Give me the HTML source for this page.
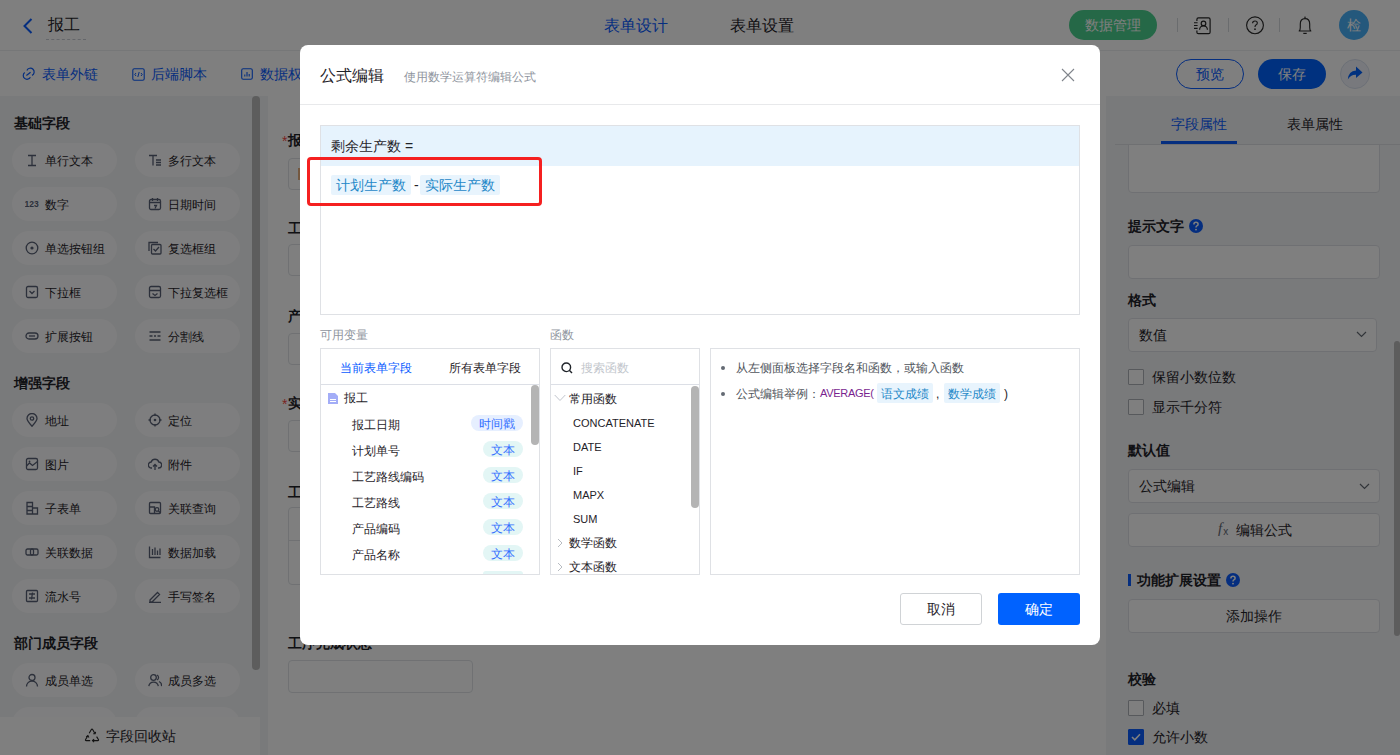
<!DOCTYPE html>
<html><head><meta charset="utf-8">
<style>
*{box-sizing:border-box;margin:0;padding:0}
html,body{width:1400px;height:755px;overflow:hidden}
body{position:relative;font-family:"Liberation Sans",sans-serif;font-size:12px;color:#1f2329;background:#fff}
.a{position:absolute}
.t{position:absolute;white-space:nowrap;line-height:1}
.chip{position:absolute;width:105px;height:34px;border-radius:17px;background:#fdfdfe}
.chip span{position:absolute;left:33px;top:12px;font-size:12px;line-height:12px;color:#1f2329;white-space:nowrap}
.chip svg{position:absolute;left:13px;top:10px}
.sec{position:absolute;left:14px;font-size:14px;font-weight:bold;line-height:14px;color:#1f2329}
.inp{position:absolute;left:1128px;width:252px;height:34px;background:#fff;border:1px solid #dfe1e6;border-radius:4px}
.lbl{position:absolute;left:1128px;font-size:14px;font-weight:bold;line-height:14px;white-space:nowrap}
.cb{position:absolute;left:1128px;width:16px;height:16px;border:1px solid #aeb2b9;border-radius:1px;background:#fff}
.rt{position:absolute;left:1152px;font-size:14px;line-height:14px;white-space:nowrap;color:#1f2329}
.fl{position:absolute;left:288px;font-size:14px;line-height:14px;font-weight:bold;white-space:nowrap;color:#1f2329}
.fin{position:absolute;left:288px;width:185px;height:32px;border:1px solid #e0e2e6;border-radius:4px;background:#fff}
.req{position:absolute;left:282px;color:#f54a45;font-size:14px;line-height:14px}
.box{position:absolute;border:1px solid #dfe1e5;background:#fff}
.tag{position:absolute;height:20px;background:#e8f4fd;color:#1e88c8;font-size:14px;line-height:20px;padding:0 5px;white-space:nowrap;border-radius:2px}
.vi{position:absolute;left:352px;font-size:12px;line-height:12px;white-space:nowrap;color:#1f2329}
.vt{position:absolute;height:16px;border-radius:8px;font-size:12px;line-height:18px;overflow:hidden;color:#3370ff;text-align:center;white-space:nowrap}
.fi{position:absolute;left:573px;font-size:11px;line-height:11px;color:#1f2329;white-space:nowrap}
.fg{position:absolute;left:569px;font-size:12px;line-height:12px;color:#1f2329;white-space:nowrap}
</style></head><body>
<!-- ===== HEADER ===== -->
<div class="a" style="left:0;top:0;width:1400px;height:51px;background:#fff;border-bottom:1px solid #eeeff1"></div>
<svg class="a" style="left:22px;top:18px" width="12" height="16" viewBox="0 0 12 16"><path d="M9.5 1 L2.5 8 L9.5 15" fill="none" stroke="#0a5cff" stroke-width="2"/></svg>
<div class="t" style="left:48px;top:17px;font-size:16px;color:#1f2329">报工</div>
<div class="a" style="left:46px;top:39px;width:40px;border-top:1px dashed #c9cdd4"></div>
<div class="t" style="left:604px;top:18px;font-size:16px;color:#0a5cff">表单设计</div>
<div class="t" style="left:730px;top:18px;font-size:16px;color:#1f2329">表单设置</div>
<div class="a" style="left:1069px;top:10px;width:88px;height:30px;border-radius:15px;background:#4ad08e"></div>
<div class="t" style="left:1085px;top:18px;font-size:14px;color:#fff">数据管理</div>
<div class="a" style="left:1177px;top:18px;width:1px;height:14px;background:#d5d8dc"></div>
<div class="a" style="left:1228px;top:18px;width:1px;height:14px;background:#d5d8dc"></div>
<div class="a" style="left:1279px;top:18px;width:1px;height:14px;background:#d5d8dc"></div>
<svg class="a" style="left:1193px;top:16px" width="20" height="20" viewBox="0 0 20 20"><path d="M3.9 5 V3.4 Q3.9 1.9 5.4 1.9 H15.6 Q17.1 1.9 17.1 3.4 V16.2 Q17.1 17.7 15.6 17.7 H5.4 Q3.9 17.7 3.9 16.2 V14.5" fill="none" stroke="#262626" stroke-width="1.2"/><path d="M1 6.7h3.6M1 9.5h3.6M1 12.4h3.6" stroke="#262626" stroke-width="1.1"/><circle cx="10.5" cy="7.4" r="2.3" fill="none" stroke="#262626" stroke-width="1.2"/><path d="M6.6 13.8 A3.9 3.9 0 0 1 14.4 13.8" fill="none" stroke="#262626" stroke-width="1.2"/></svg>
<svg class="a" style="left:1245px;top:16px" width="20" height="20" viewBox="0 0 20 20"><circle cx="10" cy="9.3" r="8.4" fill="none" stroke="#2a2a2a" stroke-width="1.15"/><path d="M7.6 7.2 Q7.6 5 10 5 Q12.3 5 12.3 7 Q12.3 8.3 10.9 9.1 Q10 9.7 10 11" fill="none" stroke="#2a2a2a" stroke-width="1.15"/><circle cx="10" cy="13.2" r="0.85" fill="#2a2a2a"/></svg>
<svg class="a" style="left:1297px;top:15px" width="16" height="20" viewBox="0 0 16 20"><path d="M2.2 16 Q3.3 15 3.3 12.5 L3.3 9 Q3.3 3.6 8 3.6 Q12.7 3.6 12.7 9 L12.7 12.5 Q12.7 15 13.8 16 Z" fill="none" stroke="#2a2a2a" stroke-width="1.15" stroke-linejoin="round"/><path d="M6.3 18.4h3.4" stroke="#2a2a2a" stroke-width="1.2"/><circle cx="8" cy="2.3" r="0.8" fill="#2a2a2a"/></svg>
<div class="a" style="left:1339px;top:10px;width:30px;height:30px;border-radius:15px;background:#48b0f8"></div>
<div class="t" style="left:1347px;top:18px;font-size:14px;color:#fff">检</div>
<!-- ===== TOOLBAR ===== -->
<div class="a" style="left:0;top:51px;width:1400px;height:45px;background:#fff;box-shadow:0 1px 2px rgba(0,0,0,.06)"></div>
<svg class="a" style="left:22px;top:67px" width="14" height="14" viewBox="0 0 14 14"><path d="M4.9 3.4 A3.8 3.8 0 1 1 10 8.4" fill="none" stroke="#0a5cff" stroke-width="1.2"/><path d="M2.7 5.5 A3.8 3.8 0 1 0 8.4 10.3" fill="none" stroke="#0a5cff" stroke-width="1.2"/><path d="M4.4 8.5 L8.6 5.2" stroke="#0a5cff" stroke-width="1.2"/></svg>
<div class="t" style="left:42px;top:67px;font-size:14px;color:#0a5cff">表单外链</div>
<svg class="a" style="left:132px;top:68px" width="13" height="13" viewBox="0 0 13 13"><rect x="0.8" y="0.8" width="11.4" height="11.4" rx="1.5" fill="none" stroke="#0a5cff" stroke-width="1.1"/><path d="M4 5 L2.8 6.5 L4 8 M9 5 L10.2 6.5 L9 8 M7.2 4 L5.8 9" fill="none" stroke="#0a5cff" stroke-width="1"/></svg>
<div class="t" style="left:151px;top:67px;font-size:14px;color:#0a5cff">后端脚本</div>
<svg class="a" style="left:241px;top:68px" width="12" height="12" viewBox="0 0 12 12"><rect x="0.7" y="0.7" width="10.6" height="10.6" rx="1.5" fill="none" stroke="#0a5cff" stroke-width="1.1"/><path d="M3.8 8.5V6.5M6 8.5V4M8.2 8.5V6" stroke="#0a5cff" stroke-width="1.1"/></svg>
<div class="t" style="left:260px;top:67px;font-size:14px;color:#0a5cff">数据权限</div>
<div class="a" style="left:1176px;top:59px;width:68px;height:30px;border-radius:15px;border:1px solid #0a5cff;background:#fff"></div>
<div class="t" style="left:1196px;top:67px;font-size:14px;color:#0a5cff">预览</div>
<div class="a" style="left:1258px;top:59px;width:68px;height:30px;border-radius:15px;background:#0062ff"></div>
<div class="t" style="left:1278px;top:67px;font-size:14px;color:#fff">保存</div>
<div class="a" style="left:1340px;top:59px;width:30px;height:30px;border-radius:15px;background:#f0f3fa;border:1px solid #d9e0ee"></div>
<svg class="a" style="left:1347px;top:66px" width="16" height="15" viewBox="0 0 16 15"><path d="M9 0.5 L15.5 6.5 L9 12 V8.7 Q3.5 8.5 0.8 13.5 Q1.5 5 9 4.5 Z" fill="#0062ff"/></svg>
<!-- ===== LEFT PANEL ===== -->
<div class="a" style="left:0;top:96px;width:268px;height:659px;background:#f3f4f6"></div>
<div class="sec" style="top:116px">基础字段</div>
<div class="sec" style="top:376px">增强字段</div>
<div class="sec" style="top:636px">部门成员字段</div>
<div class="chip" style="left:12px;top:143px"><svg width="14" height="14" viewBox="0 0 14 14"><path d="M3 2.5h8M3 12.5h8M7 2.5v10" stroke="#596176" stroke-width="1.3" fill="none"/></svg><span>单行文本</span></div>
<div class="chip" style="left:135px;top:143px"><svg width="14" height="14" viewBox="0 0 14 14"><path d="M1 2.5h8M5 2.5v10M8 7h5M8 9.5h5M8 12h5" stroke="#596176" stroke-width="1.3" fill="none"/></svg><span>多行文本</span></div>
<div class="chip" style="left:12px;top:187px"><svg width="14" height="14" viewBox="0 0 14 14"><text x="-0.5" y="9.5" font-family="Liberation Sans" font-weight="bold" font-size="8.5" fill="#596176">123</text></svg><span>数字</span></div>
<div class="chip" style="left:135px;top:187px"><svg width="14" height="14" viewBox="0 0 14 14"><rect x="1.5" y="2.5" width="11" height="10" rx="1.5" stroke="#596176" stroke-width="1.3" fill="none"/><path d="M1.5 5.5h11M4.5 1v3M9.5 1v3M6 8.5h2.5l-1.5 3" stroke="#596176" stroke-width="1.3" fill="none"/></svg><span>日期时间</span></div>
<div class="chip" style="left:12px;top:231px"><svg width="14" height="14" viewBox="0 0 14 14"><circle cx="7" cy="7" r="5.8" stroke="#596176" stroke-width="1.3" fill="none"/><circle cx="7" cy="7" r="1.6" fill="#596176"/></svg><span>单选按钮组</span></div>
<div class="chip" style="left:135px;top:231px"><svg width="14" height="14" viewBox="0 0 14 14"><path d="M1 10V1.5h9" stroke="#596176" stroke-width="1.3" fill="none"/><rect x="3.5" y="3.5" width="9.5" height="9.5" rx="1" stroke="#596176" stroke-width="1.3" fill="none"/><path d="M5.5 8l2 2 3.5-4" stroke="#596176" stroke-width="1.3" fill="none"/></svg><span>复选框组</span></div>
<div class="chip" style="left:12px;top:275px"><svg width="14" height="14" viewBox="0 0 14 14"><rect x="1.5" y="1.5" width="11" height="11" rx="1.5" stroke="#596176" stroke-width="1.3" fill="none"/><path d="M4.5 6l2.5 2.5L9.5 6" stroke="#596176" stroke-width="1.3" fill="none"/></svg><span>下拉框</span></div>
<div class="chip" style="left:135px;top:275px"><svg width="14" height="14" viewBox="0 0 14 14"><rect x="1.5" y="1.5" width="11" height="11" rx="1.5" stroke="#596176" stroke-width="1.3" fill="none"/><path d="M1.5 5.5h11M4.5 8.5l2.5 2 2.5-2" stroke="#596176" stroke-width="1.3" fill="none"/></svg><span>下拉复选框</span></div>
<div class="chip" style="left:12px;top:319px"><svg width="14" height="14" viewBox="0 0 14 14"><rect x="1" y="4" width="12" height="6" rx="3" stroke="#596176" stroke-width="1.3" fill="none"/><path d="M4 7h6" stroke="#596176" stroke-width="1.3" fill="none"/></svg><span>扩展按钮</span></div>
<div class="chip" style="left:135px;top:319px"><svg width="14" height="14" viewBox="0 0 14 14"><path d="M1.5 3h11M1.5 11h11M1.5 7h3M6 7h2M9.5 7h3" stroke="#596176" stroke-width="1.3" fill="none"/></svg><span>分割线</span></div>
<div class="chip" style="left:12px;top:403px"><svg width="14" height="14" viewBox="0 0 14 14"><path d="M7 13.2C4 10 2 7.8 2 5.5A5 5 0 0 1 12 5.5C12 7.8 10 10 7 13.2Z" stroke="#596176" stroke-width="1.3" fill="none"/><circle cx="7" cy="5.5" r="1.7" stroke="#596176" stroke-width="1.3" fill="none"/></svg><span>地址</span></div>
<div class="chip" style="left:135px;top:403px"><svg width="14" height="14" viewBox="0 0 14 14"><circle cx="7" cy="7" r="5" stroke="#596176" stroke-width="1.3" fill="none"/><circle cx="7" cy="7" r="1.3" fill="#596176"/><path d="M7 0.5v2.5M7 11v2.5M0.5 7h2.5M11 7h2.5" stroke="#596176" stroke-width="1.3" fill="none"/></svg><span>定位</span></div>
<div class="chip" style="left:12px;top:447px"><svg width="14" height="14" viewBox="0 0 14 14"><rect x="1.5" y="1.5" width="11" height="11" rx="1.5" stroke="#596176" stroke-width="1.3" fill="none"/><path d="M1.5 9l3-3 3 2.5 5-4" stroke="#596176" stroke-width="1.3" fill="none"/><circle cx="4.5" cy="4.5" r="0.9" fill="#596176"/></svg><span>图片</span></div>
<div class="chip" style="left:135px;top:447px"><svg width="14" height="14" viewBox="0 0 14 14"><path d="M4 11H3.5A3 3 0 0 1 3.2 5 4 4 0 0 1 10.8 5 3 3 0 0 1 10.5 11H10" stroke="#596176" stroke-width="1.3" fill="none"/><path d="M7 13V7.5M5 9.5l2-2 2 2" stroke="#596176" stroke-width="1.3" fill="none"/></svg><span>附件</span></div>
<div class="chip" style="left:12px;top:491px"><svg width="14" height="14" viewBox="0 0 14 14"><path d="M2 1.5h5.5V13H2z M7.5 7h5V13h-5 M2 5.5h5.5M2 9.5h5.5" stroke="#596176" stroke-width="1.3" fill="none"/></svg><span>子表单</span></div>
<div class="chip" style="left:135px;top:491px"><svg width="14" height="14" viewBox="0 0 14 14"><rect x="1.5" y="1.5" width="11" height="11" rx="1" stroke="#596176" stroke-width="1.3" fill="none"/><path d="M1.5 6h5V12.5" stroke="#596176" stroke-width="1.3" fill="none"/><circle cx="9" cy="8.5" r="1.8" stroke="#596176" stroke-width="1.3" fill="none"/><path d="M10.3 9.8l2 2" stroke="#596176" stroke-width="1.3" fill="none"/></svg><span>关联查询</span></div>
<div class="chip" style="left:12px;top:535px"><svg width="14" height="14" viewBox="0 0 14 14"><rect x="1" y="4" width="7.5" height="6" rx="1.5" stroke="#596176" stroke-width="1.3" fill="none"/><rect x="5.5" y="4" width="7.5" height="6" rx="1.5" stroke="#596176" stroke-width="1.3" fill="none"/></svg><span>关联数据</span></div>
<div class="chip" style="left:135px;top:535px"><svg width="14" height="14" viewBox="0 0 14 14"><path d="M1.5 1.5v11h11M4.5 4v6M7 2.5v7.5M9.5 5.5v4.5M12 3.5v6.5" stroke="#596176" stroke-width="1.3" fill="none"/></svg><span>数据加载</span></div>
<div class="chip" style="left:12px;top:579px"><svg width="14" height="14" viewBox="0 0 14 14"><rect x="1.5" y="1.5" width="11" height="11" rx="1" stroke="#596176" stroke-width="1.3" fill="none"/><path d="M4 5h6M4 9h6M7.5 3.5L6.5 10.5" stroke="#596176" stroke-width="1.3" fill="none"/></svg><span>流水号</span></div>
<div class="chip" style="left:135px;top:579px"><svg width="14" height="14" viewBox="0 0 14 14"><path d="M2 11l7.5-7.5 2 2L4 13H2z M1 13.5h12" stroke="#596176" stroke-width="1.3" fill="none"/></svg><span>手写签名</span></div>
<div class="chip" style="left:12px;top:663px"><svg width="14" height="14" viewBox="0 0 14 14"><circle cx="7" cy="4.5" r="3" stroke="#596176" stroke-width="1.3" fill="none"/><path d="M1.5 13.5a5.5 5.5 0 0 1 11 0" stroke="#596176" stroke-width="1.3" fill="none"/></svg><span>成员单选</span></div>
<div class="chip" style="left:135px;top:663px"><svg width="14" height="14" viewBox="0 0 14 14"><circle cx="5.5" cy="4.5" r="2.8" stroke="#596176" stroke-width="1.3" fill="none"/><path d="M0.8 13.2a4.8 4.8 0 0 1 9.5 0M9 2a2.8 2.8 0 0 1 0 5M11 8.5a4.5 4.5 0 0 1 2.5 4.7" stroke="#596176" stroke-width="1.3" fill="none"/></svg><span>成员多选</span></div>
<div class="chip" style="left:12px;top:707px"><svg width="14" height="14" viewBox="0 0 14 14"><rect x="4.5" y="1.5" width="5" height="4" stroke="#596176" stroke-width="1.3" fill="none"/><path d="M7 5.5v3M2.5 11V8.5h9V11" stroke="#596176" stroke-width="1.3" fill="none"/></svg><span>部门单选</span></div>
<div class="chip" style="left:135px;top:707px"><svg width="14" height="14" viewBox="0 0 14 14"><rect x="4.5" y="1.5" width="5" height="4" stroke="#596176" stroke-width="1.3" fill="none"/><path d="M7 5.5v3M2.5 11V8.5h9V11" stroke="#596176" stroke-width="1.3" fill="none"/></svg><span>部门多选</span></div><div class="a" style="left:252px;top:96px;width:8px;height:574px;border-radius:4px;background:#bababa"></div>
<div class="a" style="left:0;top:717px;width:260px;height:38px;background:#fefefe"></div>
<svg class="a" style="left:84px;top:727px" width="16" height="16" viewBox="0 0 16 16" fill="none" stroke="#262626" stroke-width="1.1"><path d="M5.2 6.2 L7.2 2.8 Q8 1.5 8.8 2.8 L10.9 6.5"/><path d="M9.2 6.8 L11.1 6.8 L11.6 4.9"/><path d="M12.6 9.6 L14.4 12.5 Q15 13.6 13.8 13.6 L8.6 13.6"/><path d="M10.1 12.1 L8.5 13.6 L10.1 15.1"/><path d="M6.2 13.6 L2.2 13.6 Q1 13.6 1.6 12.5 L3.8 8.8"/><path d="M2.2 9.9 L3.9 8.6 L4.9 10.5"/></svg>
<div class="t" style="left:106px;top:729px;font-size:14px;color:#1f2329">字段回收站</div>
<!-- ===== CANVAS ===== -->
<div class="a" style="left:268px;top:96px;width:838px;height:659px;background:#fff"></div>
<div class="req" style="top:134px">*</div><div class="fl" style="top:133px">报工日期</div>
<div class="fin" style="top:158px"></div>
<div class="a" style="left:298px;top:168px;width:2px;height:12px;background:#e8b080"></div>
<div class="fl" style="top:221px">工序名称</div>
<div class="fin" style="top:244px"></div>
<div class="fl" style="top:309px">产品名称</div>
<div class="fin" style="top:333px"></div>
<div class="req" style="top:397px">*</div><div class="fl" style="top:396px">实际生产数</div>
<div class="fin" style="top:420px"></div>
<div class="fl" style="top:485px">工序明细</div>
<div class="fin" style="top:507px;height:78px"></div>
<div class="a" style="left:288px;top:540px;width:185px;height:1px;background:#e0e2e6"></div>
<div class="fl" style="top:636px">工序完成状态</div>
<div class="fin" style="top:660px;height:33px"></div>
<!-- ===== RIGHT PANEL ===== -->
<div class="a" style="left:1106px;top:96px;width:294px;height:659px;background:#f3f4f6"></div>
<div class="inp" style="top:140px;height:53px"></div>
<div class="a" style="left:1106px;top:96px;width:294px;height:49px;background:#f3f4f6"></div>
<div class="t" style="left:1171px;top:117px;font-size:14px;color:#0a5cff">字段属性</div>
<div class="t" style="left:1287px;top:117px;font-size:14px;color:#1f2329">表单属性</div>
<div class="a" style="left:1115px;top:144px;width:285px;height:1px;background:#dfe1e5"></div>
<div class="a" style="left:1161px;top:141px;width:76px;height:3px;background:#0a5cff"></div>
<div class="lbl" style="top:219px">提示文字</div>
<svg class="a" style="left:1189px;top:219px" width="14" height="14" viewBox="0 0 14 14"><circle cx="7" cy="7" r="7" fill="#0a5cff"/><path d="M4.9 5.4 Q4.9 3.3 7 3.3 Q9.1 3.3 9.1 5.2 Q9.1 6.3 7.8 6.9 Q7 7.3 7 8.6" fill="none" stroke="#fff" stroke-width="1.5"/><circle cx="7" cy="10.6" r="0.95" fill="#fff"/></svg>
<div class="inp" style="top:245px"></div>
<div class="lbl" style="top:293px">格式</div>
<div class="inp" style="top:318px;width:249px;height:34px"></div>
<div class="t" style="left:1139px;top:328px;font-size:14px;color:#1f2329">数值</div>
<svg class="a" style="left:1356px;top:331px" width="11" height="7" viewBox="0 0 11 7"><path d="M1 1 L5.5 5.5 L10 1" fill="none" stroke="#646a73" stroke-width="1.2"/></svg>
<div class="cb" style="top:369px"></div><div class="rt" style="top:370px">保留小数位数</div>
<div class="cb" style="top:399px"></div><div class="rt" style="top:400px">显示千分符</div>
<div class="lbl" style="top:443px">默认值</div>
<div class="inp" style="top:469px;height:34px"></div>
<div class="t" style="left:1139px;top:479px;font-size:14px;color:#1f2329">公式编辑</div>
<svg class="a" style="left:1359px;top:483px" width="11" height="7" viewBox="0 0 11 7"><path d="M1 1 L5.5 5.5 L10 1" fill="none" stroke="#646a73" stroke-width="1.2"/></svg>
<div class="inp" style="top:513px;height:34px"></div>
<div class="t" style="left:1218px;top:521px;font-size:15px;font-style:italic;font-family:'Liberation Serif',serif;color:#646a73">f<span style="font-size:10px;font-style:normal;font-family:'Liberation Sans',sans-serif;position:relative;top:2px;left:1px">x</span></div>
<div class="t" style="left:1236px;top:523px;font-size:14px;color:#1f2329">编辑公式</div>
<div class="a" style="left:1128px;top:574px;width:3px;height:12px;background:#0a5cff"></div>
<div class="lbl" style="left:1137px;top:573px">功能扩展设置</div>
<svg class="a" style="left:1226px;top:573px" width="14" height="14" viewBox="0 0 14 14"><circle cx="7" cy="7" r="7" fill="#0a5cff"/><path d="M4.9 5.4 Q4.9 3.3 7 3.3 Q9.1 3.3 9.1 5.2 Q9.1 6.3 7.8 6.9 Q7 7.3 7 8.6" fill="none" stroke="#fff" stroke-width="1.5"/><circle cx="7" cy="10.6" r="0.95" fill="#fff"/></svg>
<div class="inp" style="top:599px;height:34px"></div>
<div class="t" style="left:1226px;top:609px;font-size:14px;color:#1f2329">添加操作</div>
<div class="lbl" style="top:672px">校验</div>
<div class="cb" style="top:700px"></div><div class="rt" style="top:701px">必填</div>
<div class="cb" style="top:729px;background:#0a5cff;border-color:#0a5cff"></div>
<svg class="a" style="left:1131px;top:733px" width="10" height="8" viewBox="0 0 10 8"><path d="M1 4 L3.8 6.8 L9 1.2" fill="none" stroke="#fff" stroke-width="1.6"/></svg>
<div class="rt" style="top:730px">允许小数</div>
<div class="a" style="left:1394px;top:341px;width:6px;height:295px;border-radius:3px;background:#bababa"></div>
<!-- ===== MASK ===== -->
<div class="a" style="left:0;top:0;width:1400px;height:755px;background:rgba(0,0,0,.5)"></div>
<!-- ===== MODAL ===== -->
<div class="a" style="left:300px;top:45px;width:800px;height:600px;background:#fff;border-radius:8px"></div>
<div class="t" style="left:320px;top:68px;font-size:16px;color:#1f2329">公式编辑</div>
<div class="t" style="left:404px;top:71px;font-size:12px;color:#8f959e">使用数学运算符编辑公式</div>
<svg class="a" style="left:1061px;top:68px" width="14" height="14" viewBox="0 0 14 14"><path d="M1 1L13 13M13 1L1 13" stroke="#80858c" stroke-width="1.1"/></svg>
<div class="a" style="left:300px;top:104px;width:800px;height:1px;background:#e8e9eb"></div>
<div class="box" style="left:320px;top:125px;width:760px;height:190px"></div>
<div class="a" style="left:321px;top:126px;width:758px;height:40px;background:#e6f3fd"></div>
<div class="t" style="left:331px;top:139px;font-size:14px;color:#1f2329">剩余生产数 =</div>
<div class="tag" style="left:331px;top:175px;width:80px">计划生产数</div>
<div class="t" style="left:414px;top:178px;font-size:14px;color:#1f2329">-</div>
<div class="tag" style="left:420px;top:175px;width:80px">实际生产数</div>
<div class="a" style="left:307px;top:157px;width:235px;height:49px;border:3px solid #f52020;border-radius:4px"></div>
<div class="t" style="left:320px;top:329px;font-size:12px;color:#8f959e">可用变量</div>
<div class="t" style="left:550px;top:329px;font-size:12px;color:#8f959e">函数</div>
<!-- vars -->
<div class="box" style="left:320px;top:348px;width:220px;height:227px"></div>
<div class="t" style="left:340px;top:362px;font-size:12px;color:#0a5cff">当前表单字段</div>
<div class="t" style="left:449px;top:362px;font-size:12px;color:#1f2329">所有表单字段</div>
<div class="a" style="left:321px;top:384px;width:218px;height:1px;background:#dcdfe6"></div>
<svg class="a" style="left:328px;top:393px" width="10" height="11" viewBox="0 0 10 11"><path d="M0 0H7L10 3V11H0Z" fill="#a3adf7"/><path d="M2 6.5H8M2 8.5H8" stroke="#fff" stroke-width="1"/></svg>
<div class="t" style="left:344px;top:392px;font-size:12px;color:#1f2329">报工</div>
<div class="vi" style="top:419px">报工日期</div>
<div class="vi" style="top:445px">计划单号</div>
<div class="vi" style="top:471px">工艺路线编码</div>
<div class="vi" style="top:497px">工艺路线</div>
<div class="vi" style="top:523px">产品编码</div>
<div class="vi" style="top:549px">产品名称</div>
<div class="vt" style="left:471px;top:415px;width:52px;background:#e6efff">时间戳</div>
<div class="vt" style="left:483px;top:441px;width:40px;background:#e3f6f5">文本</div>
<div class="vt" style="left:483px;top:467px;width:40px;background:#e3f6f5">文本</div>
<div class="vt" style="left:483px;top:493px;width:40px;background:#e3f6f5">文本</div>
<div class="vt" style="left:483px;top:519px;width:40px;background:#e3f6f5">文本</div>
<div class="vt" style="left:483px;top:545px;width:40px;background:#e3f6f5">文本</div>
<div class="a" style="left:483px;top:571px;width:40px;height:3px;border-radius:8px 8px 0 0;background:#e3f6f5"></div>
<div class="a" style="left:531px;top:385px;width:8px;height:60px;border-radius:4px;background:#b4b4b4"></div>
<!-- funcs -->
<div class="box" style="left:550px;top:348px;width:150px;height:227px"></div>
<svg class="a" style="left:561px;top:362px" width="12" height="12" viewBox="0 0 12 12"><circle cx="5.3" cy="5.3" r="4.3" fill="none" stroke="#1f2329" stroke-width="1.4"/><path d="M8.3 8.3 L11 11" stroke="#1f2329" stroke-width="1.4"/></svg>
<div class="t" style="left:581px;top:362px;font-size:12px;color:#c2c6cc">搜索函数</div>
<div class="a" style="left:551px;top:384px;width:148px;height:1px;background:#dcdfe6"></div>
<svg class="a" style="left:554px;top:394px" width="12" height="8" viewBox="0 0 12 8"><path d="M0.7 1 L6 6.5 L11.3 1" fill="none" stroke="#c0c4cc" stroke-width="1"/></svg>
<div class="fg" style="top:393px">常用函数</div>
<div class="fi" style="top:418px">CONCATENATE</div>
<div class="fi" style="top:442px">DATE</div>
<div class="fi" style="top:466px">IF</div>
<div class="fi" style="top:490px">MAPX</div>
<div class="fi" style="top:514px">SUM</div>
<svg class="a" style="left:557px;top:538px" width="6" height="10" viewBox="0 0 6 10"><path d="M1 1 L5 5 L1 9" fill="none" stroke="#b8bcc2" stroke-width="1"/></svg>
<div class="fg" style="top:537px">数学函数</div>
<svg class="a" style="left:557px;top:562px" width="6" height="10" viewBox="0 0 6 10"><path d="M1 1 L5 5 L1 9" fill="none" stroke="#b8bcc2" stroke-width="1"/></svg>
<div class="a" style="left:551px;top:561px;width:140px;height:13px;overflow:hidden"><div class="t" style="left:18px;top:0;font-size:12px;color:#1f2329">文本函数</div></div>
<div class="a" style="left:691px;top:386px;width:8px;height:122px;border-radius:4px;background:#b4b4b4"></div>
<!-- desc -->
<div class="box" style="left:710px;top:348px;width:370px;height:227px"></div>
<div class="a" style="left:721px;top:366px;width:4px;height:4px;border-radius:2px;background:#646a73"></div>
<div class="t" style="left:736px;top:362px;font-size:12px;color:#51565d">从左侧面板选择字段名和函数，或输入函数</div>
<div class="a" style="left:721px;top:392px;width:4px;height:4px;border-radius:2px;background:#646a73"></div>
<div class="t" style="left:736px;top:388px;font-size:12px;color:#51565d">公式编辑举例：</div>
<div class="t" style="left:820px;top:388px;font-size:11px;letter-spacing:-0.3px;color:#7a1f8f">AVERAGE(</div>
<div class="a" style="left:877px;top:383px;width:56px;height:20px;background:#e8f4fd;border-radius:2px"></div>
<div class="t" style="left:881px;top:388px;font-size:12px;color:#1e88c8">语文成绩</div>
<div class="t" style="left:936px;top:388px;font-size:12px;color:#1f2329">,</div>
<div class="a" style="left:944px;top:383px;width:56px;height:20px;background:#e8f4fd;border-radius:2px"></div>
<div class="t" style="left:948px;top:388px;font-size:12px;color:#1e88c8">数学成绩</div>
<div class="t" style="left:1004px;top:388px;font-size:12px;color:#1f2329">)</div>
<!-- buttons -->
<div class="a" style="left:900px;top:593px;width:82px;height:32px;border:1px solid #d0d3d6;border-radius:3px;background:#fff"></div>
<div class="t" style="left:927px;top:602px;font-size:14px;color:#1f2329">取消</div>
<div class="a" style="left:998px;top:593px;width:82px;height:32px;border-radius:3px;background:#0062ff"></div>
<div class="t" style="left:1025px;top:602px;font-size:14px;color:#fff">确定</div>
</body></html>
